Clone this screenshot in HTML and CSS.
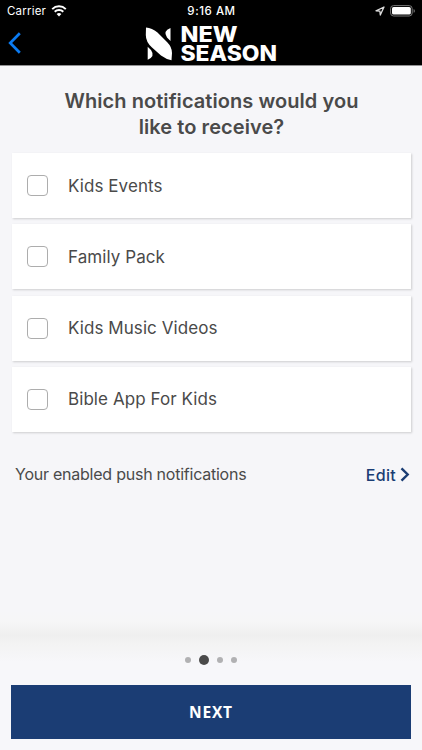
FILE: index.html
```html
<!DOCTYPE html>
<html lang="en">
<head>
  <meta charset="UTF-8">
  <meta name="viewport" content="width=device-width, initial-scale=1.0">
  <title>New Season</title>
  <link rel="stylesheet" href="styles.css">
</head>
<body>
  <header class="header">
    <div class="status-bar">
      <div class="status-left">
        <span>Carrier</span>
        <svg class="wifi" width="16" height="12" viewBox="0 0 16 12">
          <path d="M1.2 4.1a9.8 9.8 0 0 1 13.6 0M3.7 6.8a6.2 6.2 0 0 1 8.6 0" fill="none" stroke="#fff" stroke-width="2"/>
          <path d="M8 11.5 5.6 9.1a3.5 3.5 0 0 1 4.8 0z" fill="#fff"/>
        </svg>
      </div>
      <div class="clock">9:16 AM</div>
      <div class="status-right">
        <svg width="10" height="10" viewBox="0 0 10 10">
          <path d="M9 1 1 4.8l3.900.4L5.300 9z" fill="none" stroke="#ddd" stroke-width="1.3" stroke-linejoin="round"/>
        </svg>
        <svg width="26" height="12" viewBox="0 0 26 12">
          <rect x=".6" y=".6" width="21.6" height="10.4" rx="3" fill="none" stroke="#777"/>
          <rect x="2" y="2" width="18.8" height="7.6" rx="1.6" fill="#fff"/>
          <path d="M23.6 4v3.8q1.3-.5 1.3-1.9t-1.3-1.9z" fill="#777"/>
        </svg>
      </div>
    </div>
    <div class="nav-bar">
      <svg class="back" width="14" height="22" viewBox="0 0 14 22">
        <path d="M11.8 1.2 2.2 11l9.6 9.8" fill="none" stroke="#0b7bf2" stroke-width="2.7"/>
      </svg>
      <svg class="logo" width="134" height="38" viewBox="0 0 134 38">
        <path d="M1 2.500Q7 3 12.500 7.500L22 17Q27 22 27 28L26.500 35.300Q21.500 34.500 16 30.500L7 22.500Q.8 17 .8 10z" fill="#fff"/>
        <path d="M25.500 3v13l-3.500-3.500Q17.500 6 25.500 3zM2.700 34.800V21.700L6 25Q10.500 31.500 2.700 34.800z" fill="#fff"/>
        <text class="logo-text" x="35.5" y="17" textLength="57" lengthAdjust="spacingAndGlyphs">NEW</text>
        <text class="logo-text" x="35.5" y="36" textLength="96.5" lengthAdjust="spacingAndGlyphs">SEASON</text>
      </svg>
    </div>
  </header>

  <main class="content">
    <h1 class="title">Which notifications would you<br>like to receive?</h1>
    <div class="options">
      <label class="option"><input type="checkbox"><span>Kids Events</span></label>
      <label class="option"><input type="checkbox"><span>Family Pack</span></label>
      <label class="option"><input type="checkbox"><span>Kids Music Videos</span></label>
      <label class="option"><input type="checkbox"><span>Bible App For Kids</span></label>
    </div>
    <div class="enabled">
      <span class="enabled-label">Your enabled push notifications</span>
      <a class="edit">Edit
        <svg width="10" height="15" viewBox="0 0 10 15">
          <path d="m1.5 1.3 6.2 6.2-6.2 6.2" fill="none" stroke="#1b3d74" stroke-width="2.4"/>
        </svg>
      </a>
    </div>
  </main>

  <footer class="footer">
    <div class="dots">
      <span class="dot"></span>
      <span class="dot active"></span>
      <span class="dot"></span>
      <span class="dot"></span>
    </div>
    <button class="next">NEXT</button>
  </footer>
</body>
</html>
```

FILE: styles.css
```css
* {
  box-sizing: border-box;
}
body {
  margin: 0;
  height: 750px;
  display: flex;
  flex-direction: column;
  overflow: hidden;
  background: #f6f6f9;
  color: #4a4a4a;
  font-family: Inter, sans-serif;
}
.header {
  height: 66px;
  background: #000;
  color: #fff;
  border-bottom: 1px solid #919193;
}
.status-bar {
  display: grid;
  grid-template-columns: 1fr auto 1fr;
  align-items: center;
  height: 22px;
  padding: 0 6px 0 7px;
  font-size: 11.5px;
}
.status-left, .status-right {
  display: flex;
  align-items: center;
  gap: 5px;
}
.status-left {
  letter-spacing: 0.2px;
}
.status-right {
  justify-content: flex-end;
}
.clock {
  font-weight: 500;
  letter-spacing: 0.55px;
}
.nav-bar {
  display: flex;
  align-items: center;
  height: 43px;
  padding-left: 8px;
}
.back {
  margin-bottom: 2px;
}
.logo {
  margin-left: 123px;
  overflow: visible;
}
.logo-text {
  font-family: Inter, sans-serif;
  font-size: 21px;
  font-weight: 800;
  fill: #fff;
}
.content {
  padding: 22px 11px 0 12px;
}
.title {
  margin: 0 0 13px;
  text-align: center;
  font-size: 20px;
  line-height: 26px;
  font-weight: 600;
  letter-spacing: 0.06px;
}
.options {
  display: grid;
  gap: 6.3px;
}
.option {
  display: flex;
  align-items: center;
  height: 65px;
  padding-left: 15px;
  gap: 20px;
  background: #fff;
  box-shadow: 1px 1px 2px rgba(0,0,0,0.17);
  font-size: 17px;
  letter-spacing: 0.07px;
}
.option input {
  appearance: none;
  width: 21px;
  height: 21px;
  margin: 0;
  border: 1px solid #adadad;
  border-radius: 4px;
  background: #fff;
}
.enabled {
  display: flex;
  justify-content: space-between;
  align-items: center;
  margin-top: 32px;
  padding: 0 1px 0 3px;
  font-size: 16px;
}
.enabled-label {
  letter-spacing: -0.24px;
}
.edit {
  display: flex;
  align-items: center;
  gap: 4px;
  padding-top: 1px;
  color: #1b3d74;
  font-weight: 500;
  letter-spacing: 0.3px;
}
.footer {
  margin-top: auto;
  height: 140px;
  padding: 45px 11px 0;
  background: linear-gradient(#f6f6f9 0, #f6f6f7 12px, #efefef 25px, #f3f3f3 34px, #f7f7fa 52px);
}
.dots {
  display: flex;
  justify-content: center;
  align-items: center;
  gap: 8px;
  height: 10px;
  margin-bottom: 20px;
}
.dot {
  width: 6px;
  height: 6px;
  border-radius: 50%;
  background: #b1b1b3;
}
.dot.active {
  width: 10px;
  height: 10px;
  background: #4a4a4a;
}
.next {
  display: block;
  width: 100%;
  height: 54px;
  border: none;
  background: #1b3d74;
  color: #fff;
  font: bold 15.5px "Open Sans", sans-serif;
  letter-spacing: 0.8px;
}
```
